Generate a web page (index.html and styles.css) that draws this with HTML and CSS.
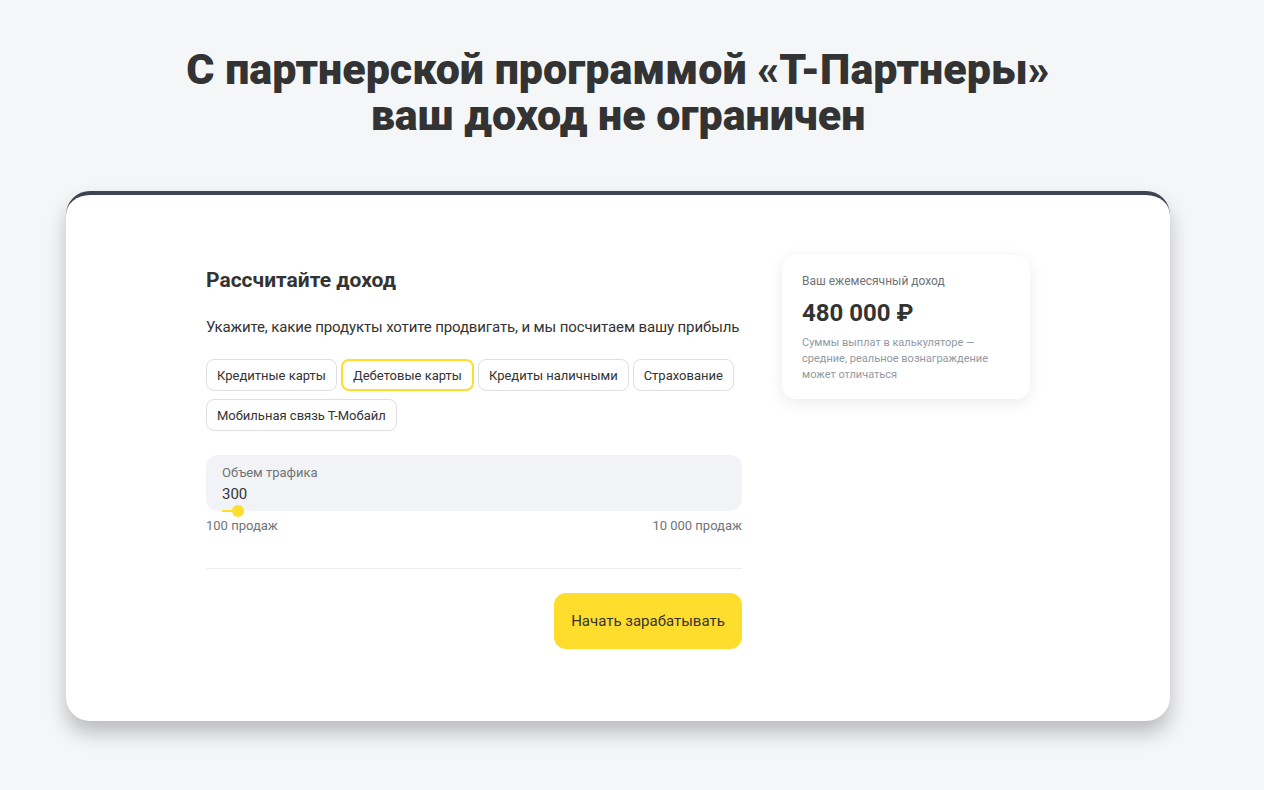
FILE: index.html
```html
<!DOCTYPE html>
<html lang="ru">

<head>
  <meta name="viewport" content="width=device-width, initial-scale=1">
  <meta charset="UTF-8">
  <link rel="stylesheet" href="styles.css">
</head>

<body>
  <section class="promo">
    <h1 class="promo-title">С партнерской программой «Т-Партнеры»<br>ваш доход не ограничен</h1>

    <div class="calc-card">
      <div class="calc">
        <div class="calc-main">
          <h2 class="calc-title">Рассчитайте доход</h2>
          <p class="calc-text">Укажите, какие продукты хотите продвигать, и мы посчитаем вашу прибыль</p>

          <div class="chips">
            <button class="chip">Кредитные карты</button>
            <button class="chip chip-active">Дебетовые карты</button>
            <button class="chip">Кредиты наличными</button>
            <button class="chip">Страхование</button>
            <button class="chip">Мобильная связь Т-Мобайл</button>
          </div>

          <div class="traffic">
            <span class="traffic-label">Объем трафика</span>
            <span class="traffic-value">300</span>
            <div class="slider">
              <div class="slider-fill"></div>
              <div class="slider-thumb"></div>
            </div>
          </div>
          <div class="range">
            <span>100 продаж</span>
            <span>10 000 продаж</span>
          </div>

          <div class="calc-footer">
            <button class="btn-start">Начать зарабатывать</button>
          </div>
        </div>

        <div class="income">
          <span class="income-label">Ваш ежемесячный доход</span>
          <span class="income-value">480 000 ₽</span>
          <p class="income-note">Суммы выплат в калькуляторе — средние, реальное вознаграждение может отличаться</p>
        </div>
      </div>
    </div>
  </section>
</body>

</html>
```

FILE: styles.css
```css
body {
  margin: 0;
  padding: 0;
  background-color: #f5f6f8;
  font-family: Roboto, "Noto Sans", sans-serif;
  color: #333333;
}

.promo {
  display: flex;
  flex-direction: column;
  align-items: center;
  width: 1236px;
  padding-top: 46px;
  padding-bottom: 40px;
}

.promo-title {
  margin: 0;
  font-family: Roboto, sans-serif;
  font-size: 43px;
  font-weight: 900;
  line-height: 46px;
  text-align: center;
  color: #333333;
}

.calc-card {
  width: 1104px;
  margin-top: 53px;
  background-color: #ffffff;
  border-top: 4px solid #3d4452;
  border-radius: 24px;
  box-shadow: 0 12px 20px rgba(0, 0, 0, 0.24);
  padding: 61px 0 72px;
  box-sizing: border-box;
}

.calc {
  display: flex;
  justify-content: center;
  gap: 40px;
}

.calc-main {
  width: 536px;
  display: flex;
  flex-direction: column;
}

.calc-title {
  margin: 10px 0 0;
  font-size: 21px;
  font-weight: 700;
  line-height: 28px;
}

.calc-text {
  margin: 23px 0 0;
  font-size: 15px;
  line-height: 20px;
  letter-spacing: -0.12px;
  white-space: nowrap;
}

.chips {
  display: flex;
  flex-wrap: wrap;
  gap: 8px 4px;
  margin-top: 22px;
}

.chip {
  height: 32px;
  padding: 0 10px;
  border: 1px solid #dddfe3;
  border-radius: 8px;
  background-color: #ffffff;
  font-family: Roboto, sans-serif;
  font-size: 13px;
  color: #333333;
  cursor: pointer;
}

.chip-active {
  border: 2px solid #ffdd2d;
}

.traffic {
  position: relative;
  margin-top: 24px;
  height: 56px;
  padding: 10px 16px 0;
  box-sizing: border-box;
  background-color: #f2f3f6;
  border-radius: 12px;
  display: flex;
  flex-direction: column;
}

.traffic-label {
  font-size: 13px;
  line-height: 16px;
  color: #6f7378;
}

.traffic-value {
  margin-top: 3px;
  font-size: 15px;
  line-height: 20px;
  color: #333333;
}

.slider {
  position: absolute;
  left: 16px;
  right: 16px;
  bottom: -1px;
  height: 2px;
}

.slider-fill {
  position: absolute;
  left: 0;
  top: 0;
  width: 16px;
  height: 2px;
  background-color: #ffdd2d;
}

.slider-thumb {
  position: absolute;
  left: 10px;
  top: -5px;
  width: 12px;
  height: 12px;
  border-radius: 50%;
  background-color: #ffdd2d;
}

.range {
  display: flex;
  justify-content: space-between;
  margin-top: 7px;
  font-size: 13px;
  line-height: 16px;
  color: #6f7378;
}

.calc-footer {
  margin-top: 34px;
  padding-top: 24px;
  border-top: 1px solid #eceef1;
  display: flex;
  justify-content: flex-end;
}

.btn-start {
  width: 188px;
  height: 56px;
  border: none;
  border-radius: 12px;
  background-color: #ffdd2d;
  font-family: Roboto, sans-serif;
  font-size: 15px;
  color: #333333;
  cursor: pointer;
}

.income {
  width: 248px;
  height: 144px;
  margin-top: -1px;
  padding: 18px 20px;
  box-sizing: border-box;
  background-color: #ffffff;
  border-radius: 14px;
  box-shadow: 0 4px 16px rgba(0, 0, 0, 0.08);
  display: flex;
  flex-direction: column;
}

.income-label {
  font-size: 12px;
  line-height: 16px;
  color: #6f7378;
}

.income-value {
  margin-top: 10px;
  font-size: 24px;
  font-weight: 700;
  line-height: 28px;
  color: #333333;
}

.income-note {
  margin: 8px 0 0;
  font-size: 11px;
  line-height: 16px;
  color: #9299a2;
}
```
